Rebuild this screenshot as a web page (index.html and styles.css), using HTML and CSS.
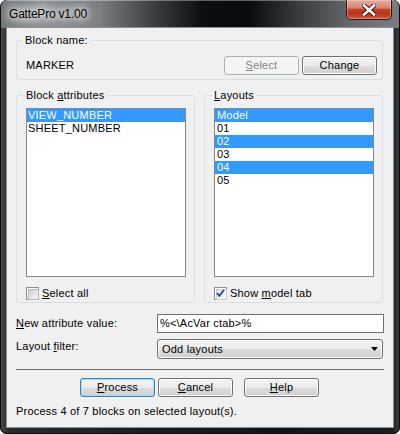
FILE: index.html
```html
<!DOCTYPE html>
<html>
<head>
<meta charset="utf-8">
<title>GattePro v1.00</title>
<link rel="stylesheet" href="styles.css">
</head>
<body>
<div class="window">
  <div class="titlebar">
    <span class="title">GattePro v1.00</span>
    <div class="close">
      <svg width="14" height="12" viewBox="0 0 14 12">
        <path d="M2 1.5 L12 10.5 M12 1.5 L2 10.5" stroke="#3b1a12" stroke-width="4.6" stroke-linecap="square" fill="none"/>
        <path d="M2 1.5 L12 10.5 M12 1.5 L2 10.5" stroke="#ffffff" stroke-width="2.6" stroke-linecap="square" fill="none"/>
      </svg>
    </div>
  </div>
  <div class="client">
    <fieldset class="group name-group">
      <legend>Block name:</legend>
      <div class="name-row">
        <span class="name">MARKER</span>
        <div class="name-btns">
          <div class="btn disabled"><u>S</u>elect</div>
          <div class="btn">Chan<u>g</u>e</div>
        </div>
      </div>
    </fieldset>

    <div class="lists">
      <fieldset class="group half">
        <legend>Block <u>a</u>ttributes</legend>
        <ul class="listbox attrs">
          <li class="sel">VIEW_NUMBER</li>
          <li>SHEET_NUMBER</li>
        </ul>
        <div class="check">
          <span class="cb"></span>
          <span><u>S</u>elect all</span>
        </div>
      </fieldset>
      <fieldset class="group half">
        <legend><u>L</u>ayouts</legend>
        <ul class="listbox layouts">
          <li class="sel">Model</li>
          <li>01</li>
          <li class="sel">02</li>
          <li>03</li>
          <li class="sel">04</li>
          <li>05</li>
        </ul>
        <div class="check">
          <span class="cb checked">
            <svg width="9" height="9" viewBox="0 0 9 9"><path d="M1 4.2 L3.4 6.8 L8 1" stroke="#2a4b8d" stroke-width="1.9" fill="none"/></svg>
          </span>
          <span>Show <u>m</u>odel tab</span>
        </div>
      </fieldset>
    </div>

    <div class="field-row row-value">
      <span class="lbl"><u>N</u>ew attribute value:</span>
      <div class="textbox">%&lt;\AcVar ctab&gt;%</div>
    </div>
    <div class="field-row row-filter">
      <span class="lbl">Layout <u>f</u>ilter:</span>
      <div class="combo">
        <span>Odd layouts</span>
        <svg class="arrow" width="7" height="4" viewBox="0 0 7 4"><path d="M0 0 H7 L3.5 4 Z" fill="#000"/></svg>
      </div>
    </div>

    <div class="sep"></div>

    <div class="actions">
      <div class="btn default"><u>P</u>rocess</div>
      <div class="btn cancel"><u>C</u>ancel</div>
      <div class="btn"><u>H</u>elp</div>
    </div>

    <div class="status">Process 4 of 7 blocks on selected layout(s).</div>
  </div>
</div>
</body>
</html>
```

FILE: styles.css
```css
* { box-sizing: border-box; }

html, body {
  margin: 0;
  padding: 0;
  background: #ffffff;
}

body {
  width: 400px;
  height: 434px;
  overflow: hidden;
  font-family: "Liberation Sans", Arial, sans-serif;
  font-size: 11px;
  line-height: 13px;
  letter-spacing: 0.2px;
  color: #000;
}

.window {
  width: 400px;
  height: 434px;
  border-radius: 7px;
  overflow: hidden;
  display: flex;
  flex-direction: column;
  background: linear-gradient(90deg, #4a4e51 0%, #2a2d30 2%, #1a1d20 40%, #121518 70%, #1c1f22 98%, #3c4043 100%);
  box-shadow: inset 0 0 0 1px #0a0a0a;
}

.titlebar {
  height: 28px;
  flex: none;
  display: flex;
  justify-content: space-between;
  align-items: flex-start;
  padding: 0 7px 0 9px;
  background: linear-gradient(90deg, #6f7477 0%, #8d9194 10%, #7a7e81 25%, #3d4144 38%, #0d1013 50%, #080b0e 62%, #3a3e41 75%, #666a6d 88%, #7a7e80 100%);
  border-radius: 7px 7px 0 0;
  box-shadow: inset 0 1px 0 rgba(255,255,255,0.35), inset 1px 0 0 #0a0a0a, inset -1px 0 0 #0a0a0a;
}

.title {
  margin-top: 7px;
  font-size: 12px;
  line-height: 15px;
  letter-spacing: -0.2px;
  color: #000;
  text-shadow: 0 0 6px #fff, 0 0 10px #fff, 0 0 14px rgba(255,255,255,0.9), 0 0 18px rgba(255,255,255,0.8);
}

.close {
  width: 46px;
  height: 20px;
  margin-right: 1px;
  display: flex;
  align-items: center;
  justify-content: center;
  border: 1px solid #3a1610;
  border-top: none;
  border-radius: 0 0 5px 5px;
  background: linear-gradient(#e4ad9f 0%, #d68571 42%, #c2412a 50%, #b8321b 70%, #d3573a 100%);
  box-shadow: inset 0 0 0 1px rgba(255,255,255,0.3);
}

.client {
  flex: none;
  margin: 0 7px;
  height: 399px;
  background: #f0f0f0;
  padding: 6px 9px 0 9px;
  display: flex;
  flex-direction: column;
  box-shadow: 0 0 0 1px #8b9095;
}

.group {
  margin: 0;
  border: 1px solid #d5dfe5;
  border-radius: 3px;
  min-width: 0;
}

.group legend {
  padding: 0 2px;
  margin-left: -2px;
  line-height: 13px;
}

.name-group {
  padding: 9px 5px 4px 8px;
  margin-right: 1px;
}

.name-row {
  display: flex;
  align-items: center;
  justify-content: space-between;
  height: 19px;
}

.name {
  margin-left: 1px;
}

.name-btns {
  display: flex;
  gap: 3px;
}

.lists {
  margin-top: 9px;
  display: flex;
  gap: 9px;
  margin-right: 1px;
}

.half {
  width: 179px;
  padding: 6px 8px 2px 9px;
}

.listbox {
  margin: 0;
  padding: 0;
  list-style: none;
  height: 169px;
  border: 1px solid #828790;
  background: #fff;
}

.listbox li {
  height: 13px;
  line-height: 13px;
  padding-left: 1px;
  white-space: nowrap;
}

.listbox.layouts li {
  padding-left: 2px;
}

.listbox li.sel {
  background: #3399ff;
  color: #fff;
}

.check {
  margin-top: 10px;
  height: 13px;
  display: flex;
  align-items: center;
  gap: 3px;
}

.cb {
  width: 13px;
  height: 13px;
  border: 1px solid #8e8f8f;
  background: #fff;
  padding: 1px;
  position: relative;
  flex: none;
}

.cb::before {
  content: "";
  display: block;
  width: 9px;
  height: 9px;
  border: 1px solid #b4b8bd;
  background: linear-gradient(135deg, #c9cdd2 0%, #e4e6e9 55%, #f6f6f6 100%);
}

.cb.checked::before {
  border-color: #c9cdd3;
  background: linear-gradient(135deg, #e3e6ea 0%, #f4f5f6 60%, #fbfbfb 100%);
}

.cb svg {
  position: absolute;
  left: 1px;
  top: 1px;
}

.field-row {
  display: flex;
  align-items: flex-start;
}

.lbl {
  width: 141px;
  flex: none;
}

.row-value {
  margin-top: 11px;
  height: 19px;
}

.row-value .lbl {
  margin-top: 3px;
}

.row-filter {
  margin-top: 6px;
  height: 20px;
}

.row-filter .lbl {
  margin-top: 1px;
}

.textbox {
  flex: 1;
  height: 19px;
  border: 1px solid #6f6f6f;
  background: #fff;
  padding: 2px 0 0 2px;
  white-space: nowrap;
}

.combo {
  flex: 1;
  height: 20px;
  margin-right: 1px;
  border: 1px solid #707070;
  border-radius: 3px;
  background: linear-gradient(#f2f2f2 0%, #ebebeb 50%, #dddddd 51%, #cfcfcf 100%);
  box-shadow: inset 0 0 0 1px #fbfbfb;
  display: flex;
  align-items: center;
  justify-content: space-between;
  padding: 0 4px 0 4px;
}

.sep {
  margin-top: 10px;
  height: 1px;
  background: #6d6d6d;
  flex: none;
}

.actions {
  margin-top: 8px;
  display: flex;
  padding-left: 64px;
}

.btn {
  width: 75px;
  height: 19px;
  border: 1px solid #707070;
  border-radius: 3px;
  background: linear-gradient(#f2f2f2 0%, #ebebeb 50%, #dddddd 51%, #cfcfcf 100%);
  box-shadow: inset 0 0 0 1px #fcfcfc;
  text-align: center;
  line-height: 17px;
  white-space: nowrap;
}

.btn.disabled {
  border-color: #adb2b5;
  background: #f4f4f4;
  box-shadow: none;
  color: #838383;
}

.btn.default {
  border-color: #3c7fb1;
  box-shadow: inset 0 0 0 1px #9fe0f7;
  margin-right: 3px;
}

.btn.cancel {
  margin-right: 11px;
}

.status {
  margin-top: 8px;
  line-height: 13px;
}
```
